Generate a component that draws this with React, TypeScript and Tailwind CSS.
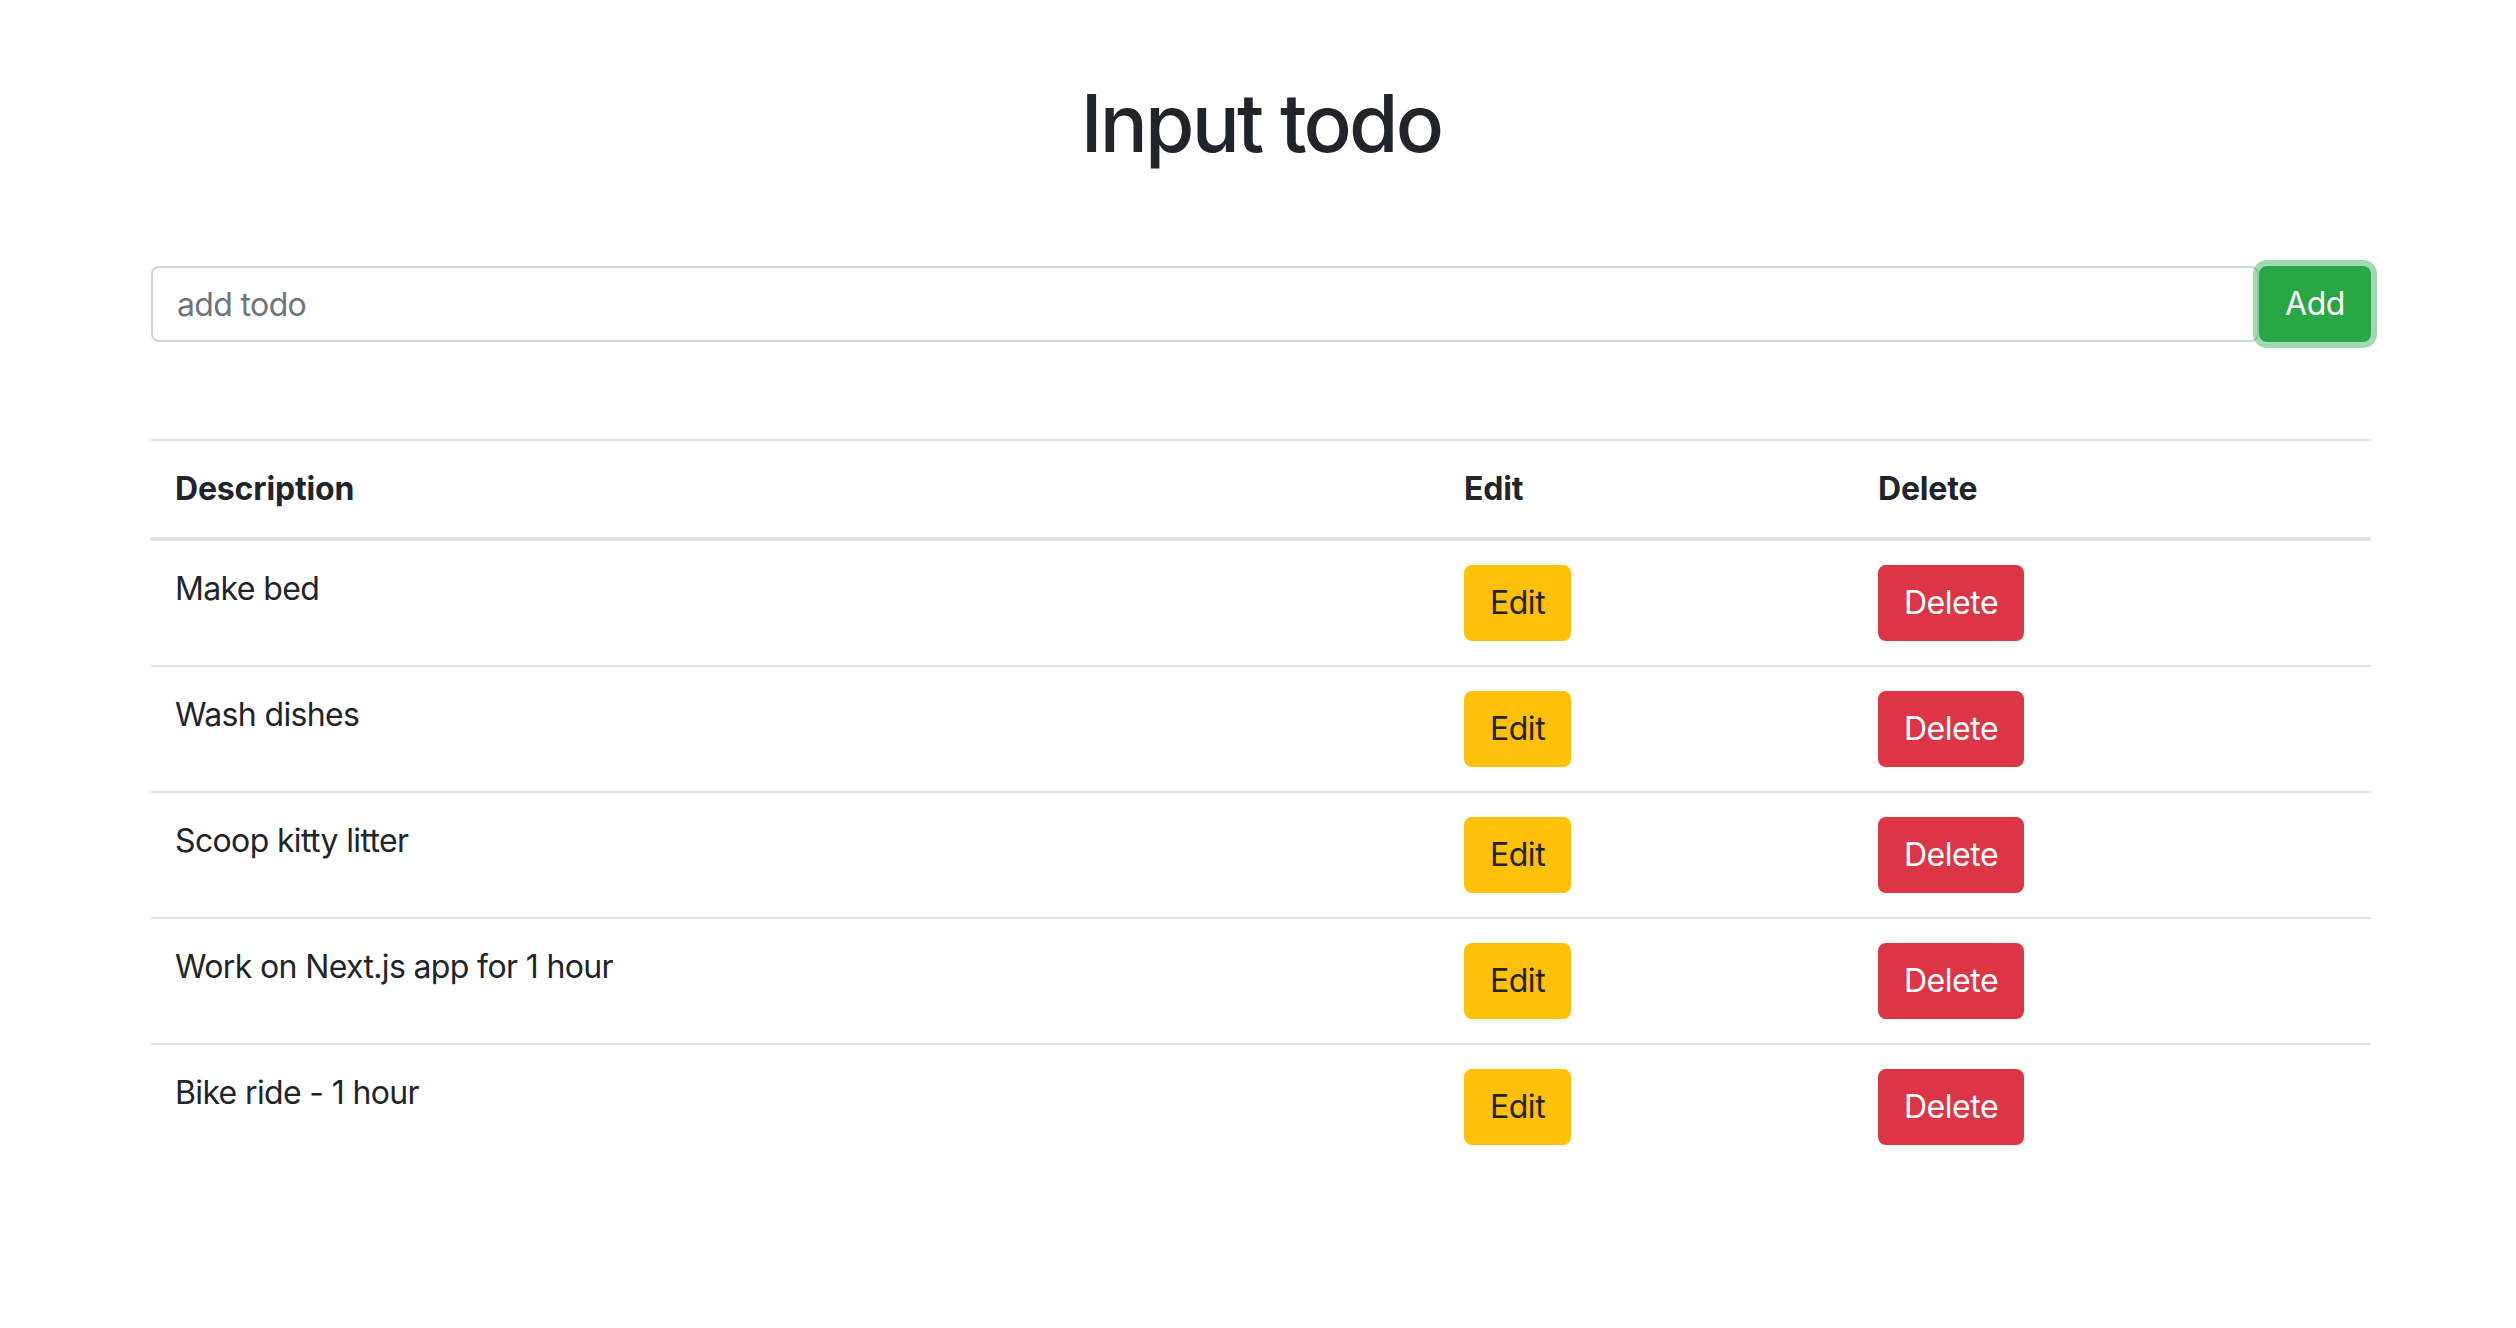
import React from "react";

const todos = [
  "Make bed",
  "Wash dishes",
  "Scoop kitty litter",
  "Work on Next.js app for 1 hour",
  "Bike ride - 1 hour",
];

export default function App() {
  return (
    <div
      className="min-h-screen bg-white text-[#212529]"
      style={{ fontFamily: 'Inter, "Noto Sans", "Liberation Sans", sans-serif' }}
    >
      <div className="ml-[151px] w-[2220px]">
        <h1 className="pt-[75px] text-center text-[80px] leading-[96px] font-medium tracking-[-0.035em]">
          Input todo
        </h1>
        <form className="mt-[95px] flex" onSubmit={(e) => e.preventDefault()}>
          <input
            type="text"
            placeholder="add todo"
            className="h-[76px] flex-1 rounded-[8px] border-2 border-[#ced4da] bg-white px-[24px] text-[32px] leading-[48px] tracking-[-0.02em] text-[#495057] outline-none placeholder:text-[#6c757d]"
          />
          <button
            type="submit"
            className="h-[76px] w-[112px] rounded-[8px] border-2 border-[#28a745] bg-[#28a745] text-[32px] leading-[48px] tracking-[-0.015em] text-white shadow-[0_0_0_6px_rgba(72,180,97,0.5)]"
          >
            Add
          </button>
        </form>
        <table className="mt-[97px] w-full table-fixed border-collapse text-left text-[32px] leading-[48px] tracking-[-0.02em]">
          <thead>
            <tr>
              <th className="w-[1289px] border-t-2 border-b-4 border-[#dee2e6] p-[24px] align-bottom font-bold tracking-[-0.005em]">
                Description
              </th>
              <th className="w-[414px] border-t-2 border-b-4 border-[#dee2e6] p-[24px] align-bottom font-bold tracking-[-0.005em]">
                Edit
              </th>
              <th className="w-[517px] border-t-2 border-b-4 border-[#dee2e6] p-[24px] align-bottom font-bold tracking-[-0.005em]">
                Delete
              </th>
            </tr>
          </thead>
          <tbody>
            {todos.map((t, i) => (
              <tr key={t}>
                <td
                  className={`${i === 0 ? "" : "border-t-2"} border-[#dee2e6] p-[24px] align-top`}
                >
                  {t}
                </td>
                <td
                  className={`${i === 0 ? "" : "border-t-2"} border-[#dee2e6] p-[24px] align-top`}
                >
                  <button className="h-[76px] rounded-[8px] border-2 border-[#ffc107] bg-[#ffc107] px-[24px] text-[32px] leading-[48px] tracking-[-0.015em] text-[#212529]">
                    Edit
                  </button>
                </td>
                <td
                  className={`${i === 0 ? "" : "border-t-2"} border-[#dee2e6] p-[24px] align-top`}
                >
                  <button className="h-[76px] rounded-[8px] border-2 border-[#dc3545] bg-[#dc3545] px-[24px] text-[32px] leading-[48px] tracking-[-0.015em] text-white">
                    Delete
                  </button>
                </td>
              </tr>
            ))}
          </tbody>
        </table>
      </div>
    </div>
  );
}
